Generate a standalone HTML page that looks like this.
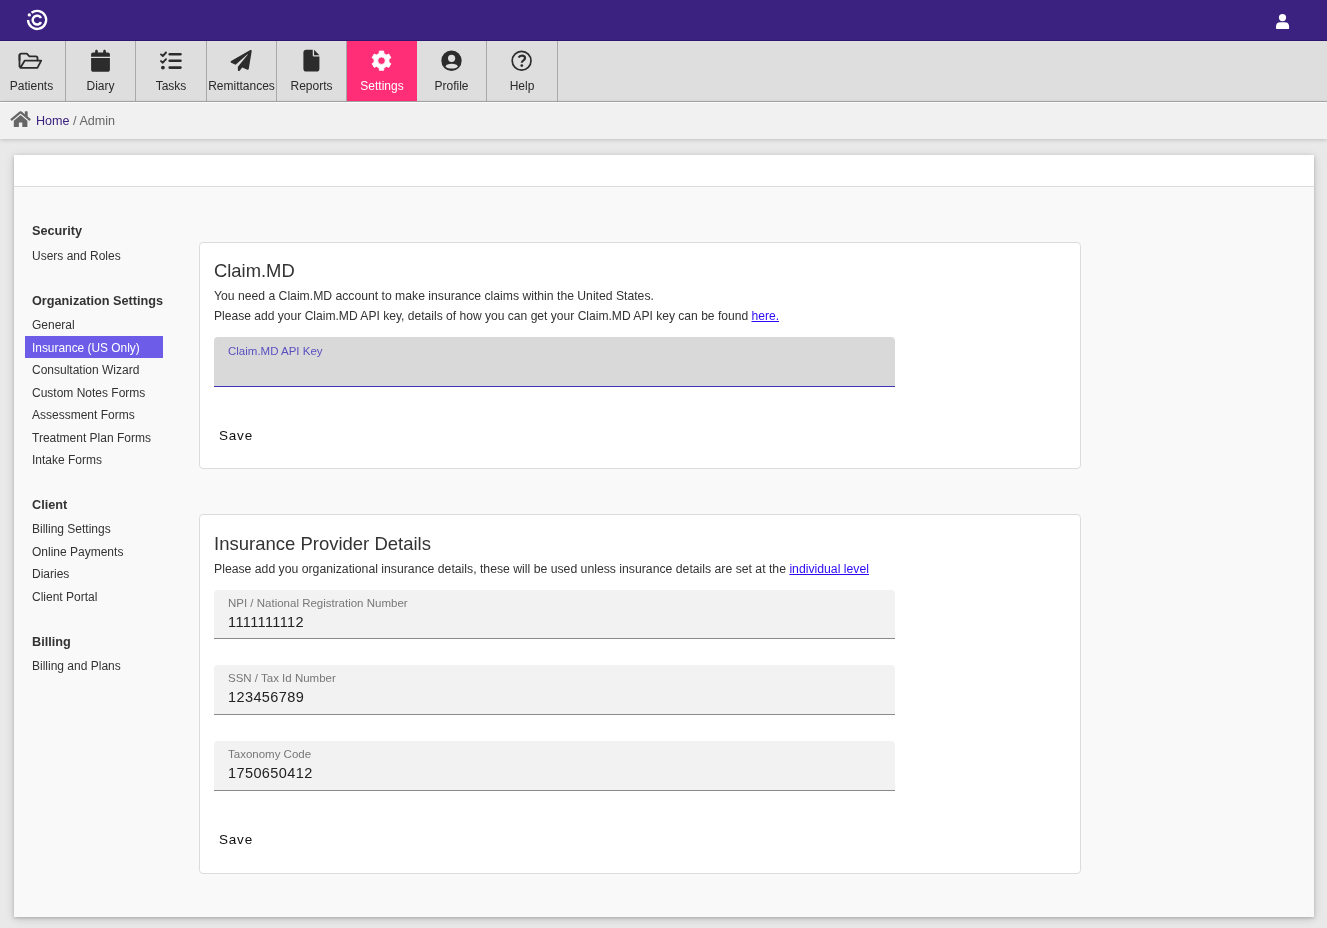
<!DOCTYPE html>
<html><head><meta charset="utf-8">
<style>
*{box-sizing:border-box;margin:0;padding:0}
html,body{width:1327px;height:928px;overflow:hidden}
body{background:#e9e9e9;font-family:"Liberation Sans",sans-serif;color:#333;position:relative}
.abs{position:absolute}
.t{position:absolute;white-space:nowrap;will-change:transform}
#hdr{left:0;top:0;width:1327px;height:41px;background:#3b2180;border-bottom:1px solid #2e1670}
#nav{left:0;top:41px;width:1327px;height:61px;background:#dedede;border-bottom:1px solid #a9a9a9}
.tab{position:absolute;top:0;height:60px;border-right:1px solid #a9a9a9}
.tab.on{background:#ff2e76;border-right:none}
#bc{left:0;top:102px;width:1327px;height:37px;background:#f1f1f1;border-top:1px solid #fbfbfb;box-shadow:0 1px 4px rgba(0,0,0,.18)}
#card{left:14px;top:155px;width:1300px;height:762px;background:#f9f9f9;box-shadow:0 1px 3px rgba(0,0,0,.18),0 2px 9px rgba(0,0,0,.16)}
#cardh{left:14px;top:155px;width:1300px;height:32px;background:#fff;border-bottom:1px solid #dcdcdc}
.panel{position:absolute;left:199px;width:882px;background:#fff;border:1px solid #dcdcdc;border-radius:4px}
.field{position:absolute;left:214px;width:681px;background:#f2f2f2;border-bottom:1px solid #8a8a8a;border-radius:4px 4px 0 0}
.sel{position:absolute;left:25px;top:336px;width:138px;height:22px;background:#6c5ce7}
a{color:#2d0af5;text-decoration:underline}
</style></head><body>
<div id="hdr" class="abs"></div>
<div id="nav" class="abs">
<div class="tab" style="left:0px;width:66px"></div>
<div class="tab" style="left:66px;width:70px"></div>
<div class="tab" style="left:136px;width:71px"></div>
<div class="tab" style="left:207px;width:70px"></div>
<div class="tab" style="left:277px;width:70px"></div>
<div class="tab on" style="left:347px;width:70px"></div>
<div class="tab" style="left:417px;width:70px"></div>
<div class="tab" style="left:487px;width:71px"></div>
</div>
<div class="t" style="left:-1px;top:79px;font-size:12px;line-height:14px;height:14px;color:#2a2a2a;font-weight:400;width:65px;text-align:center">Patients</div>

<div class="t" style="left:66px;top:79px;font-size:12px;line-height:14px;height:14px;color:#2a2a2a;font-weight:400;width:69px;text-align:center">Diary</div>

<div class="t" style="left:136px;top:79px;font-size:12px;line-height:14px;height:14px;color:#2a2a2a;font-weight:400;width:70px;text-align:center">Tasks</div>

<div class="t" style="left:207px;top:79px;font-size:12px;line-height:14px;height:14px;color:#2a2a2a;font-weight:400;width:69px;text-align:center">Remittances</div>

<div class="t" style="left:277px;top:79px;font-size:12px;line-height:14px;height:14px;color:#2a2a2a;font-weight:400;width:69px;text-align:center">Reports</div>

<div class="t" style="left:347px;top:79px;font-size:12px;line-height:14px;height:14px;color:#fff;font-weight:400;width:70px;text-align:center">Settings</div>

<div class="t" style="left:417px;top:79px;font-size:12px;line-height:14px;height:14px;color:#2a2a2a;font-weight:400;width:69px;text-align:center">Profile</div>

<div class="t" style="left:487px;top:79px;font-size:12px;line-height:14px;height:14px;color:#2a2a2a;font-weight:400;width:70px;text-align:center">Help</div>

<div id="bc" class="abs"></div>
<div class="t" style="left:36px;top:114px;font-size:12.6px;line-height:14px;height:14px;color:#666;font-weight:400;"><span style="color:#3b2180">Home</span> / Admin</div>

<div id="card" class="abs"></div><div id="cardh" class="abs"></div>
<div class="sel"></div>
<div class="t" style="left:32px;top:224px;font-size:12.7px;line-height:14px;height:14px;color:#333;font-weight:700;">Security</div>

<div class="t" style="left:32px;top:249px;font-size:12px;line-height:14px;height:14px;color:#333;font-weight:400;">Users and Roles</div>

<div class="t" style="left:32px;top:294px;font-size:12.7px;line-height:14px;height:14px;color:#333;font-weight:700;">Organization Settings</div>

<div class="t" style="left:32px;top:318px;font-size:12px;line-height:14px;height:14px;color:#333;font-weight:400;">General</div>

<div class="t" style="left:32px;top:341px;font-size:11.9px;line-height:14px;height:14px;color:#fff;font-weight:400;">Insurance (US Only)</div>

<div class="t" style="left:32px;top:363px;font-size:12px;line-height:14px;height:14px;color:#333;font-weight:400;">Consultation Wizard</div>

<div class="t" style="left:32px;top:386px;font-size:12px;line-height:14px;height:14px;color:#333;font-weight:400;">Custom Notes Forms</div>

<div class="t" style="left:32px;top:408px;font-size:12px;line-height:14px;height:14px;color:#333;font-weight:400;">Assessment Forms</div>

<div class="t" style="left:32px;top:431px;font-size:12px;line-height:14px;height:14px;color:#333;font-weight:400;">Treatment Plan Forms</div>

<div class="t" style="left:32px;top:453px;font-size:12px;line-height:14px;height:14px;color:#333;font-weight:400;">Intake Forms</div>

<div class="t" style="left:32px;top:498px;font-size:12.7px;line-height:14px;height:14px;color:#333;font-weight:700;">Client</div>

<div class="t" style="left:32px;top:522px;font-size:12px;line-height:14px;height:14px;color:#333;font-weight:400;">Billing Settings</div>

<div class="t" style="left:32px;top:545px;font-size:12px;line-height:14px;height:14px;color:#333;font-weight:400;">Online Payments</div>

<div class="t" style="left:32px;top:567px;font-size:12px;line-height:14px;height:14px;color:#333;font-weight:400;">Diaries</div>

<div class="t" style="left:32px;top:590px;font-size:12px;line-height:14px;height:14px;color:#333;font-weight:400;">Client Portal</div>

<div class="t" style="left:32px;top:635px;font-size:12.7px;line-height:14px;height:14px;color:#333;font-weight:700;">Billing</div>

<div class="t" style="left:32px;top:659px;font-size:12px;line-height:14px;height:14px;color:#333;font-weight:400;">Billing and Plans</div>

<div class="panel" style="top:242px;height:227px"></div>
<div class="panel" style="top:514px;height:360px"></div>
<div class="t" style="left:214px;top:260px;font-size:18.4px;line-height:21px;height:21px;color:#333;font-weight:400;">Claim.MD</div>

<div class="t" style="left:214px;top:289px;font-size:12.2px;line-height:14px;height:14px;color:#333;font-weight:400;">You need a Claim.MD account to make insurance claims within the United States.</div>

<div class="t" style="left:214px;top:309px;font-size:12.08px;line-height:14px;height:14px;color:#333;font-weight:400;">Please add your Claim.MD API key, details of how you can get your Claim.MD API key can be found <a>here.</a></div>

<div class="field" style="top:337px;height:50px;background:#d9d9d9;border-bottom:1px solid #3d32b8"></div>
<div class="t" style="left:228px;top:345px;font-size:11.5px;line-height:12px;height:12px;color:#5b4fc0;font-weight:400;">Claim.MD API Key</div>

<div class="t" style="left:219px;top:428px;font-size:13.5px;line-height:15px;height:15px;color:#111;font-weight:400;letter-spacing:0.8px">Save</div>

<div class="t" style="left:214px;top:533px;font-size:18.5px;line-height:21px;height:21px;color:#333;font-weight:400;">Insurance Provider Details</div>

<div class="t" style="left:214px;top:562px;font-size:12.24px;line-height:14px;height:14px;color:#333;font-weight:400;">Please add you organizational insurance details, these will be used unless insurance details are set at the <a>individual level</a></div>

<div class="field" style="top:590px;height:49px"></div>
<div class="t" style="left:228px;top:597px;font-size:11.5px;line-height:12px;height:12px;color:#777;font-weight:400;">NPI / National Registration Number</div>

<div class="t" style="left:228px;top:614px;font-size:14.5px;line-height:16px;height:16px;color:#222;font-weight:400;letter-spacing:.4px">1111111112</div>

<div class="field" style="top:665px;height:50px"></div>
<div class="t" style="left:228px;top:672px;font-size:11.5px;line-height:12px;height:12px;color:#777;font-weight:400;">SSN / Tax Id Number</div>

<div class="t" style="left:228px;top:689px;font-size:14.5px;line-height:16px;height:16px;color:#222;font-weight:400;letter-spacing:.4px">123456789</div>

<div class="field" style="top:741px;height:50px"></div>
<div class="t" style="left:228px;top:748px;font-size:11.5px;line-height:12px;height:12px;color:#777;font-weight:400;">Taxonomy Code</div>

<div class="t" style="left:228px;top:765px;font-size:14.5px;line-height:16px;height:16px;color:#222;font-weight:400;letter-spacing:.4px">1750650412</div>

<div class="t" style="left:219px;top:832px;font-size:13.5px;line-height:15px;height:15px;color:#111;font-weight:400;letter-spacing:0.8px">Save</div>

<svg class="abs" style="left:0;top:0" width="600" height="140"><path fill="#fff" fill-rule="evenodd" stroke="#fff" stroke-width="0.8" stroke-linejoin="round" d="M379.11 53.49 L379.34 51.04 L383.66 51.04 L383.89 53.49 L386.55 55.02 L388.79 54.00 L390.95 57.74 L388.94 59.16 L388.94 62.24 L390.95 63.66 L388.79 67.40 L386.55 66.38 L383.89 67.91 L383.66 70.36 L379.34 70.36 L379.11 67.91 L376.45 66.38 L374.21 67.40 L372.05 63.66 L374.06 62.24 L374.06 59.16 L372.05 57.74 L374.21 54.00 L376.45 55.02Z M385.25 60.70 A3.75 3.75 0 1 0 377.75 60.70 A3.75 3.75 0 1 0 385.25 60.70Z"/></svg>
<svg class="abs" style="left:1260px;top:0" width="40" height="41"><circle cx="22.5" cy="17.6" r="3.6" fill="#fff"/><path fill="#fff" d="M17.2 29.1 Q16 29.1 16 27.9 V26.6 Q16 22.3 20.5 22.3 H24.5 Q29.1 22.3 29.1 26.6 V27.9 Q29.1 29.1 27.9 29.1 Z"/></svg>
<svg class="abs" style="left:0;top:0" width="600" height="140" viewBox="0 0 600 140">
<g fill="none" stroke="#fff">
<path stroke-width="2.3" d="M31.53 12.77 A9.05 9.05 0 1 1 28.05 19.9"/>
<path stroke-width="2.5" d="M41.03 18.01 A4.45 4.45 0 1 0 41.03 22.19"/>
</g>
<circle cx="29.3" cy="14.9" r="1.65" fill="#fff"/>

<g fill="#2c2c2c">
<path transform="translate(91.1 49.8) scale(0.042 0.0428)" d="M96 32V64H48C21.5 64 0 85.5 0 112v48H448V112c0-26.5-21.5-48-48-48H352V32c0-17.7-14.3-32-32-32s-32 14.3-32 32V64H160V32c0-17.7-14.3-32-32-32S96 14.3 96 32zM448 192H0V464c0 26.5 21.5 48 48 48H400c26.5 0 48-21.5 48-48V192z"/>
<path transform="translate(303.4 49.8) scale(0.0417 0.0426)" d="M0 64C0 28.7 28.7 0 64 0H224V128c0 17.7 14.3 32 32 32H384V448c0 35.3-28.7 64-64 64H64c-35.3 0-64-28.7-64-64V64zm384 64H256V0L384 128z"/>
<path transform="translate(230.6 49.9) scale(0.0413)" d="M476 3.2L12.5 270.6c-18.1 10.4-15.8 35.6 2.2 43.2L121 358.4l287.3-253.2c5.5-4.9 13.3 2.6 8.6 8.3L176 407v80.5c0 23.6 28.5 32.9 42.5 15.8L282 426l124.6 52.2c14.2 6 30.4-2.9 33-18.2l72-432C515 7.8 493.3-6.8 476 3.2z"/>
<circle cx="162.9" cy="67.6" r="1.9"/>
</g>
<g fill="none" stroke="#2c2c2c" stroke-linecap="round" stroke-linejoin="round">
<path stroke-width="1.8" d="M19.5 60 V55.6 Q19.5 53.7 21.4 53.7 H26.8 L29.4 56.4 H35.8 Q37.5 56.4 37.5 58.1 V60.4"/>
<path stroke-width="1.8" d="M24.6 60.7 H41.2 L37.4 67.8 H20.4 Z M19.5 55 V66.5"/>
<path stroke-width="2.6" d="M169.7 54.2 H180.5 M169.7 60.8 H180.5 M169.7 67.6 H180.5"/>
<path stroke-width="1.9" d="M161 54.4 L162.8 56 L166 52.5 M161 61.1 L162.8 62.7 L166 59.2"/>
<circle cx="521.6" cy="60.7" r="9.4" stroke-width="1.7"/>
<path stroke-width="2.2" stroke-linecap="butt" d="M518.6 57.6 Q519.6 55.6 522 55.6 Q525 55.6 525 58.1 Q525 59.6 523.2 60.6 Q521.8 61.5 521.8 62.8"/>
</g>
<circle cx="521.8" cy="65.6" r="1.4" fill="#2c2c2c"/>
<circle cx="451.5" cy="60.7" r="10.2" fill="#2c2c2c"/>
<circle cx="451.6" cy="58.3" r="3.6" fill="#dedede"/>
<ellipse cx="451.7" cy="66.2" rx="5.9" ry="2.4" fill="#dedede"/>
<path transform="translate(10.4 110.07) scale(0.0354)" fill="#666" d="M280.37 148.26L96 300.11V464a16 16 0 0 0 16 16l112.06-.29a16 16 0 0 0 15.92-16V368a16 16 0 0 1 16-16h64a16 16 0 0 1 16 16v95.64a16 16 0 0 0 16 16.05L464 480a16 16 0 0 0 16-16V300L295.67 148.26a12.19 12.19 0 0 0-15.3 0zM571.6 251.47L488 182.56V44.05a12 12 0 0 0-12-12h-56a12 12 0 0 0-12 12v72.61L318.47 43a48 48 0 0 0-61 0L4.34 251.47a12 12 0 0 0-1.6 16.9l25.5 31A12 12 0 0 0 45.15 301l235.22-193.74a12.19 12.19 0 0 1 15.3 0L530.9 301a12 12 0 0 0 16.9-1.6l25.5-31a12 12 0 0 0-1.7-16.93z"/>
</svg>

</body></html>
